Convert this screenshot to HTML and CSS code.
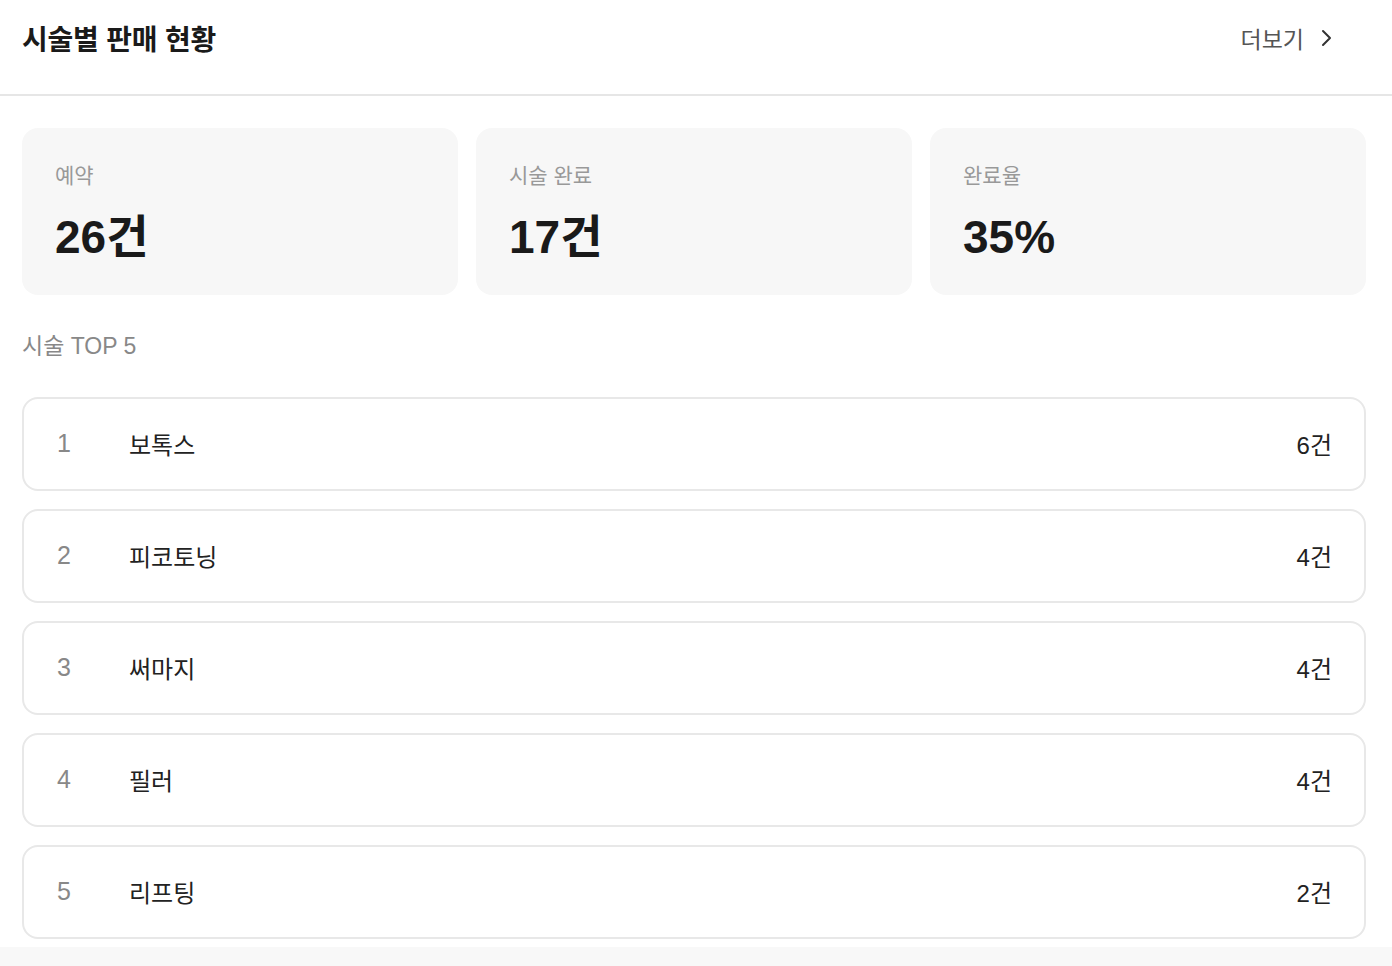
FILE: index.html
```html
<!DOCTYPE html>
<html lang="ko">
<head>
<meta charset="utf-8">
<link rel="stylesheet" href="styles.css">
</head>
<body>
<section class="panel">
  <header class="panel-head">
    <h1 class="title">시술별 판매 현황</h1>
    <a class="more" href="#">더보기
      <svg class="chev" viewBox="0 0 14 20" width="14" height="20"><path d="M3 3 L10 10 L3 17" fill="none" stroke="#333" stroke-width="2" stroke-linecap="round" stroke-linejoin="round"/></svg>
    </a>
  </header>
  <div class="body">
    <div class="stats">
      <div class="stat"><div class="stat-label">예약</div><div class="stat-value">26건</div></div>
      <div class="stat"><div class="stat-label">시술 완료</div><div class="stat-value">17건</div></div>
      <div class="stat"><div class="stat-label">완료율</div><div class="stat-value">35%</div></div>
    </div>
    <div class="sub">시술 TOP 5</div>
    <ul class="list">
      <li class="row"><span class="rank">1</span><span class="name">보톡스</span><span class="count">6건</span></li>
      <li class="row"><span class="rank">2</span><span class="name">피코토닝</span><span class="count">4건</span></li>
      <li class="row"><span class="rank">3</span><span class="name">써마지</span><span class="count">4건</span></li>
      <li class="row"><span class="rank">4</span><span class="name">필러</span><span class="count">4건</span></li>
      <li class="row"><span class="rank">5</span><span class="name">리프팅</span><span class="count">2건</span></li>
    </ul>
  </div>
</section>
</body>
</html>
```
FILE: styles.css
```css
* { box-sizing: border-box; }
html, body { margin: 0; padding: 0; }
body {
  background: #f8f8f8;
  font-family: "Liberation Sans", "Noto Sans CJK KR", sans-serif;
  color: #1a1a1a;
}
.panel {
  background: #fff;
  box-shadow: 0 4px 10px rgba(0,0,0,0.04);
}
.panel-head {
  height: 96px;
  display: flex;
  align-items: center;
  justify-content: space-between;
  padding: 0 22px 18px 22px;
  border-bottom: 2px solid #e6e6e6;
}
.title {
  margin: 0;
  font-size: 28px;
  font-weight: 700;
  color: #1a1a1a;
  letter-spacing: -0.2px;
}
.more {
  display: flex;
  align-items: center;
  gap: 16px;
  font-size: 23px;
  color: #555;
  text-decoration: none;
  padding-right: 36px;
}
.chev { display: block; }
.body {
  padding: 32px 26px 8px 22px;
}
.stats {
  display: grid;
  grid-template-columns: repeat(3, 1fr);
  gap: 18px;
}
.stat {
  background: #f7f7f7;
  border-radius: 16px;
  height: 167px;
  padding: 34px 33px 0 33px;
}
.stat-label {
  font-size: 21px;
  color: #999;
  line-height: 28px;
}
.stat-value {
  margin-top: 19px;
  font-size: 46px;
  font-weight: 700;
  line-height: 56px;
  color: #1a1a1a;
}
.sub {
  margin-top: 36px;
  font-size: 23px;
  color: #888;
  line-height: 30px;
}
.list {
  list-style: none;
  margin: 36px 0 0 0;
  padding: 0;
  display: flex;
  flex-direction: column;
  gap: 18px;
}
.row {
  height: 94px;
  border: 2px solid #e8e8e8;
  border-radius: 16px;
  display: flex;
  align-items: center;
  padding: 0 32px 2px 33px;
  font-size: 24px;
}
.rank {
  width: 72px;
  color: #888;
  font-size: 25px;
}
.name {
  flex: 1;
  color: #222;
}
.count {
  color: #222;
}
```
